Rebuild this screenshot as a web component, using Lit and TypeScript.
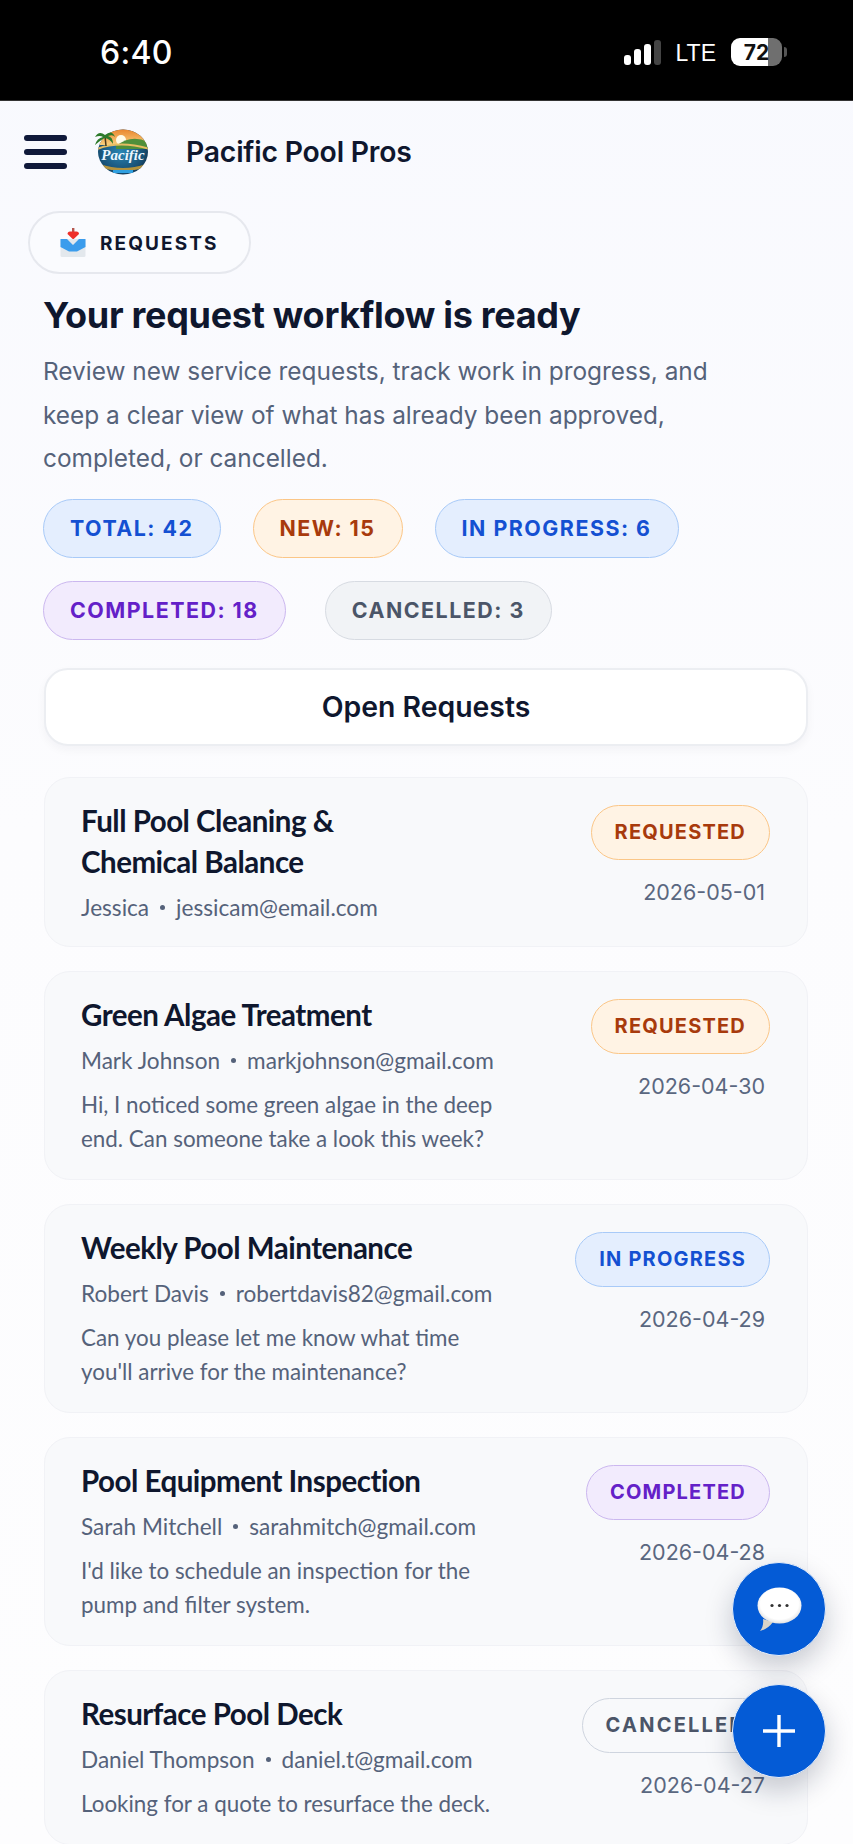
import { LitElement, html, css, svg } from "lit";
import { customElement } from "lit/decorators.js";

const chipRows = [
  { gap: "r1", items: [["TOTAL: 42", "blue"], ["NEW: 15", "orange"], ["IN PROGRESS: 6", "blue"]] },
  { gap: "r2", items: [["COMPLETED: 18", "purple"], ["CANCELLED: 3", "gray"]] },
];

const cards = [
  { t: "Full Pool Cleaning &\nChemical Balance", n: "Jessica", e: "jessicam@email.com", d: "", b: "REQUESTED", c: "orange", date: "2026-05-01" },
  { t: "Green Algae Treatment", n: "Mark Johnson", e: "markjohnson@gmail.com", d: "Hi, I noticed some green algae in the deep end. Can someone take a look this week?", b: "REQUESTED", c: "orange", date: "2026-04-30" },
  { t: "Weekly Pool Maintenance", n: "Robert Davis", e: "robertdavis82@gmail.com", d: "Can you please let me know what time you'll arrive for the maintenance?", b: "IN PROGRESS", c: "blue", date: "2026-04-29" },
  { t: "Pool Equipment Inspection", n: "Sarah Mitchell", e: "sarahmitch@gmail.com", d: "I'd like to schedule an inspection for the pump and filter system.", b: "COMPLETED", c: "purple", date: "2026-04-28" },
  { t: "Resurface Pool Deck", n: "Daniel Thompson", e: "daniel.t@gmail.com", d: "Looking for a quote to resurface the deck.", b: "CANCELLED", c: "outline", date: "2026-04-27" },
];

const logo = svg`<svg class="logo" viewBox="0 0 54 46" aria-hidden="true">
  <defs>
    <clipPath id="lc"><ellipse cx="29" cy="23" rx="25" ry="22.5"/></clipPath>
    <linearGradient id="sky" x1="0" y1="0" x2="0" y2="1"><stop offset="0" stop-color="#e9842c"/><stop offset="1" stop-color="#f8cf7e"/></linearGradient>
    <radialGradient id="sea" cx="50%" cy="50%" r="60%"><stop offset="0" stop-color="#2a86b4"/><stop offset="0.7" stop-color="#174f74"/><stop offset="1" stop-color="#10283f"/></radialGradient>
  </defs>
  <g clip-path="url(#lc)">
    <rect width="54" height="46" fill="url(#sea)"/>
    <rect width="54" height="16" fill="url(#sky)"/>
    <circle cx="27" cy="11" r="5" fill="#fffbe8"/>
    <path d="M22 17 Q38 4 56 14 V20 H22Z" fill="#4f8f3a"/>
    <path d="M3 20 Q26 11 56 20" fill="none" stroke="#e6bd62" stroke-width="2"/>
    <path d="M6 35 Q29 43 52 35 V39 Q29 44 6 39Z" fill="#b3923c"/>
    <rect x="19" y="41" width="20" height="3" fill="#2f9fe0"/>
  </g>
  <path d="M12 17 L11 7" stroke="#4a3a1c" stroke-width="1.5"/>
  <path d="M11 6 Q5 1 1 8 Q6 6 9 8 Q3 9 1 16 Q8 10 11 9 Q16 10 19 15 Q19 8 14 7 Q19 5 21 8 Q18 0 11 6Z" fill="#2c7a2a"/>
  <text x="29" y="31" text-anchor="middle" class="logotext">Pacific</text>
</svg>`;

const inbox = svg`<svg class="inbox" viewBox="0 0 26 30" aria-hidden="true">
  <rect x="12" y="0" width="2.4" height="4" fill="#b5564e"/>
  <path d="M13.2 11.5 L7.5 6 Q7.5 3.4 10 3.4 H16.4 Q19 3.4 19 6Z" fill="#ee2f2a"/>
  <rect x="0.5" y="11" width="25" height="18" rx="1.5" fill="#e3e8ed"/>
  <path d="M0.5 11 H7 L13 17 L19 11 H25.5 V19 L17 23.5 H9 L0.5 19Z" fill="#3b9cec"/>
</svg>`;

const chat = svg`<svg class="chat" viewBox="0 0 46 46" aria-hidden="true">
  <defs>
    <radialGradient id="bub" cx="50%" cy="45%" r="60%"><stop offset="0.72" stop-color="#ffffff"/><stop offset="1" stop-color="#d6d6d6"/></radialGradient>
  </defs>
  <path d="M4 45 Q8 40 7 33 L17 36 Q12 43 4 45Z" fill="#d9d4c8"/>
  <ellipse cx="23.5" cy="19.5" rx="22" ry="18" fill="url(#bub)"/>
  <circle cx="16" cy="19.5" r="1.6" fill="#333"/><circle cx="23.5" cy="19.5" r="1.6" fill="#333"/><circle cx="31" cy="19.5" r="1.6" fill="#333"/>
</svg>`;

@customElement("app-root")
export class AppRoot extends LitElement {
  static styles = css`
    :host {
      display: block;
      position: relative;
      height: 1844px;
      overflow: hidden;
      background: linear-gradient(180deg, #f8f9fe 0%, #fcfcfe 45%, #fdfdfe 100%);
      font-family: Inter, "Liberation Sans", sans-serif;
      color: #0f172e;
    }
    .status {
      height: 101px;
      background: #000;
      color: #fff;
      display: flex;
      align-items: center;
      justify-content: space-between;
      padding: 5px 66px 0 100px;
      box-sizing: border-box;
      border-bottom: 1px solid #333;
    }
    .time { font-size: 32px; font-weight: 500; letter-spacing: 0.3px; }
    .sys { display: flex; align-items: center; gap: 15px; padding-top: 2px; }
    .signal { display: flex; align-items: flex-end; gap: 3px; height: 25px; margin-top: -2px; }
    .signal i { display: block; width: 7px; border-radius: 3px; background: #fff; }
    .signal i:nth-child(1) { height: 10px; }
    .signal i:nth-child(2) { height: 16px; }
    .signal i:nth-child(3) { height: 21px; }
    .signal i:nth-child(4) { height: 25px; background: #444; }
    .lte { font-size: 23px; font-weight: 500; font-family: "Liberation Sans", sans-serif; }
    .batt { display: flex; align-items: center; gap: 2px; margin-top: -3px; }
    .cell {
      width: 51px;
      height: 28px;
      border-radius: 9px;
      background: linear-gradient(90deg, #fff 0 73%, #6f6f6f 73% 100%);
      color: #111;
      font-size: 21px;
      font-weight: 700;
      display: flex;
      align-items: center;
      justify-content: center;
    }
    .nub { width: 3px; height: 10px; border-radius: 0 3px 3px 0; background: #555; }

    .top { display: flex; align-items: center; box-sizing: border-box; height: 104px; padding: 0 0 2px 24px; }
    .burger { display: flex; flex-direction: column; gap: 8px; width: 43px; }
    .burger i { display: block; height: 6px; border-radius: 3px; background: #10193a; }
    .logo { width: 54px; height: 46px; margin-left: 27px; }
    .logotext { font: italic 700 15px "Liberation Serif", serif; fill: #eaf6ff; }
    .brand { margin-left: 38px; font-size: 28.3px; font-weight: 600; letter-spacing: -0.2px; }

    .pillwrap { padding: 6px 0 0 28px; }
    .pill {
      display: inline-flex;
      align-items: center;
      box-sizing: border-box;
      width: 223px;
      height: 63px;
      padding-left: 30px;
      gap: 14px;
      border: 2px solid #e6e8ee;
      border-radius: 32px;
      font-size: 19px;
      font-weight: 700;
      letter-spacing: 2.1px;
      background: #fafbfe;
    }
    .pill span { padding-top: 1px; }
    .inbox { width: 26px; height: 30px; }

    .main { padding: 16px 45px 0 44px; }
    h1 { margin: 0 0 0 -1px; font-size: 36px; line-height: 50px; font-weight: 700; letter-spacing: -0.3px; }
    .lead { margin: 10px 0 0 -1px; font-size: 24.4px; line-height: 43.5px; color: #55627a; width: 720px; }
    .chips { display: flex; flex-direction: column; row-gap: 23px; margin: 18px 0 0 -1px; }
    .row { display: flex; }
    .r1 { column-gap: 32px; }
    .r2 { column-gap: 39px; }
    .chip {
      box-sizing: border-box;
      height: 59px;
      display: flex;
      align-items: center;
      padding: 0 26px;
      border-radius: 30px;
      border: 1.5px solid;
      font-size: 21.4px;
      font-weight: 700;
      letter-spacing: 1.5px;
    }

    .open {
      box-sizing: border-box;
      height: 78px;
      margin-top: 28px;
      display: flex;
      align-items: center;
      justify-content: center;
      background: #fff;
      border: 2px solid #eceef2;
      border-radius: 24px;
      box-shadow: 0 4px 10px rgba(20, 30, 60, 0.04);
      font-size: 28.4px;
      font-weight: 600;
    }

    .cards { display: flex; flex-direction: column; gap: 24px; margin-top: 31px; }
    .card {
      box-sizing: border-box;
      display: flex;
      justify-content: space-between;
      padding: 22px 37px 23px 36px;
      background: #f8f9fb;
      border: 1px solid #f1f2f6;
      border-radius: 26px;
    }
    .left { width: 424px; font-family: Lato, "Noto Sans", sans-serif; }
    .title { font-size: 29.5px; line-height: 41px; font-weight: 700; white-space: pre; letter-spacing: -0.5px; }
    .meta { margin-top: 11px; font-size: 22.6px; line-height: 30px; color: #55627a; display: flex; align-items: center; gap: 11px; white-space: nowrap; }
    .dot { width: 5px; height: 5px; border-radius: 50%; background: #55627a; }
    .desc { margin-top: 12px; font-size: 22.4px; line-height: 34px; color: #55627a; }
    .right { display: flex; flex-direction: column; align-items: flex-end; padding-top: 5px; }
    .badge {
      box-sizing: border-box;
      height: 55px;
      display: flex;
      align-items: center;
      padding: 0 23px;
      border-radius: 28px;
      border: 1.5px solid;
      font-size: 20px;
      font-weight: 700;
      letter-spacing: 1.2px;
    }
    .date { margin-top: 17px; margin-right: 5px; font-size: 21.5px; line-height: 30px; color: #5a6780; }

    .blue { background: #e4eefe; border-color: #a8caf8; color: #1450d2; }
    .orange { background: #fff3e4; border-color: #fbc687; color: #a83a0c; }
    .purple { background: #f2ebfd; border-color: #cbb7ef; color: #6420c8; }
    .gray { background: #f1f3f6; border-color: #d7dbe2; color: #4b5568; }
    .outline { background: #f8f9fb; border-color: #cfd5df; color: #4b5568; letter-spacing: 2.2px; }

    .fab {
      position: absolute;
      left: 732px;
      width: 94px;
      height: 94px;
      border-radius: 50%;
      background: #045bd6;
      border: 1px solid #e8eef8;
      box-sizing: border-box;
      box-shadow: 0 12px 28px rgba(15, 25, 50, 0.22);
      display: flex;
      align-items: center;
      justify-content: center;
    }
    .chatfab { top: 1562px; }
    .plusfab { top: 1684px; }
    .chat { width: 46px; height: 46px; }
    .plus { width: 34px; height: 34px; }
  `;

  render() {
    return html`
      <div class="status">
        <div class="time">6:40</div>
        <div class="sys">
          <div class="signal"><i></i><i></i><i></i><i></i></div>
          <div class="lte">LTE</div>
          <div class="batt"><div class="cell">72</div><div class="nub"></div></div>
        </div>
      </div>
      <div class="top">
        <div class="burger"><i></i><i></i><i></i></div>
        ${logo}
        <div class="brand">Pacific Pool Pros</div>
      </div>
      <div class="pillwrap"><div class="pill">${inbox}<span>REQUESTS</span></div></div>
      <div class="main">
        <h1>Your request workflow is ready</h1>
        <p class="lead">Review new service requests, track work in progress, and keep a clear view of what has already been approved, completed, or cancelled.</p>
        <div class="chips">
          ${chipRows.map(
            (r) => html`<div class="row ${r.gap}">${r.items.map(([t, c]) => html`<div class="chip ${c}">${t}</div>`)}</div>`
          )}
        </div>
        <div class="open">Open Requests</div>
        <div class="cards">
          ${cards.map(
            (c) => html`<div class="card">
              <div class="left">
                <div class="title">${c.t}</div>
                <div class="meta"><span>${c.n}</span><span class="dot"></span><span>${c.e}</span></div>
                ${c.d ? html`<div class="desc">${c.d}</div>` : ""}
              </div>
              <div class="right">
                <div class="badge ${c.c}">${c.b}</div>
                <div class="date">${c.date}</div>
              </div>
            </div>`
          )}
        </div>
      </div>
      <div class="fab chatfab">${chat}</div>
      <div class="fab plusfab">
        <svg class="plus" viewBox="0 0 34 34" aria-hidden="true"><path d="M17 1V33M1 17H33" stroke="#fff" stroke-width="3.4" fill="none"/></svg>
      </div>
    `;
  }
}
